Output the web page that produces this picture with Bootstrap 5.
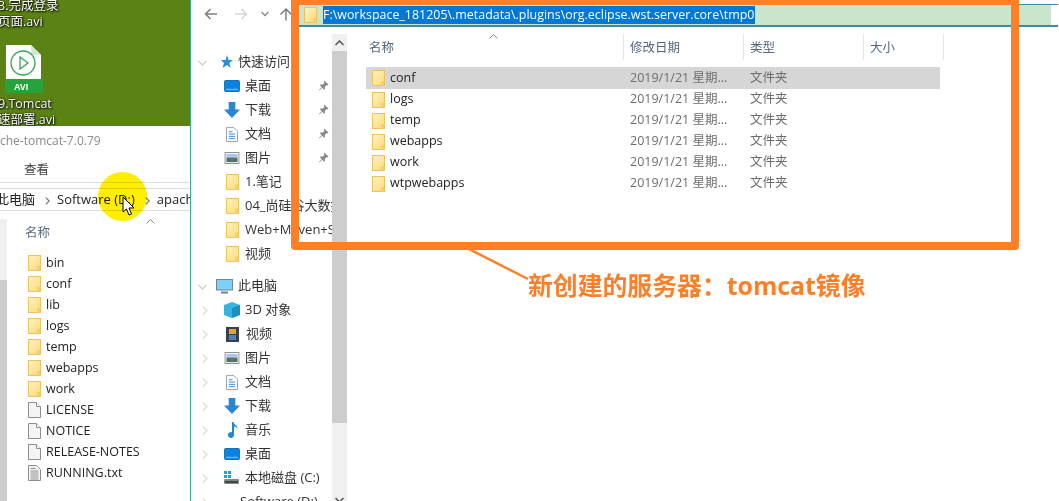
<!DOCTYPE html>
<html lang="zh-CN">
<head>
  <meta charset="UTF-8">
  <meta name="viewport" content="width=device-width, initial-scale=1.0">
  <title>tomcat镜像</title>
  <link href="https://cdn.jsdelivr.net/npm/bootstrap@5.3.0/dist/css/bootstrap.min.css" rel="stylesheet">
  <style>
    body {
      width: 1059px;
      height: 501px;
      overflow: hidden;
      position: relative;
      font-family: "Open Sans", "Noto Sans CJK SC", sans-serif;
      font-size: 12.5px;
      color: #222;
      background: #fff;
    }
    .left-win { width: 191px; flex: none; overflow: hidden; border-right: 1px solid #2fb48c; height: 501px; }
    .right-win { width: 867px; flex: none; height: 501px; overflow: hidden; border-left: 1px solid #fff; }

    /* desktop strip */
    .desk { height: 126px; background: #5a8214; color: #fff; text-shadow: 0 0 2px #000, 1px 1px 2px #000; line-height: 16px; font-size: 12.5px; overflow: hidden; padding-top: 1px; }
    .desk-text { margin-left: -2px; position: relative; top: -3px; }
    .desk-icon { width: 38px; height: 48px; margin: 12px 0 0 5px; display: block; }
    .desk-icon + .desk-text { margin-top: 6px; }
    .desk-icon text { font: 700 9px "Liberation Sans", sans-serif; fill: #fff; text-shadow: none; }

    .title-line { height: 30px; line-height: 30px; color: #8a8a8a; font-size: 12px; white-space: nowrap; }
    .menu-line { height: 27px; line-height: 27px; padding-left: 24px; border-bottom: 1px solid #dcdcdc; color: #444; }
    .crumb-line { height: 23px; line-height: 21px; margin-top: 5px; border-top: 1px solid #dcdcdc; border-bottom: 1px solid #dcdcdc; white-space: nowrap; overflow: hidden; margin-left: -4px; font-size: 13px; }
    .crumb-line span { margin-right: 10px; }
    .crumb-line svg { margin-right: 7px; }
    .left-track { width: 7px; background: #f0f0f0; flex: none; height: 290px; margin-top: 8px; }
    .left-thumb { height: 61px; }
    .left-thumb-on { height: 229px; background: #cdcdcd; }
    .left-head { height: 40px; padding: 10px 0 0 18px; color: #5a6d85; line-height: 24px; }
    .file-list { margin: 0 0 0 21px; padding: 1px 0 0 0; }
    .file-list li { height: 21px; line-height: 21px; display: flex; align-items: center; gap: 5px; white-space: nowrap; }

    /* right window */
    .tool-line { height: 27px; }
    .nav-btns { width: 106px; flex: none; padding-left: 12px; }
    .nav-drop { margin-left: 13px; }
    .nav-up { margin-left: 10px; }
    .addr { margin-top: 4px; height: 23px; border-top: 1px solid #3c8ca8; border-bottom: 2px solid #3c8ca8; flex: 1; display: flex; position: relative; }
    .addr-fill { flex: 1; background: #c8e6cc; display: flex; align-items: center; margin-right: 7px; padding-left: 6px; }
    .addr-sel { background: #0078d7; color: #fff; line-height: 18px; height: 18px; white-space: nowrap; font-size: 12.45px; padding-right: 1px; margin-left: 6px; }

    .side { width: 140px; flex: none; overflow: hidden; padding-top: 23px; }
    .side-row { height: 24px; display: flex; align-items: center; white-space: nowrap; position: relative; color: #333; font-size: 13px; }
    .side-row svg.ic { flex: none; margin-right: 5px; }
    .side-row svg.ic-w { margin-left: -16px; }
    .side-row svg.ic-n { margin-left: -14px; margin-right: 7px; }
    .side-row svg.ic-f { margin-left: -14px; margin-right: 6px; }
    .side-row svg.ic-m { margin-left: -12px; margin-right: 7px; }
    .sub { padding-left: 48px; }
    .top-row { padding-left: 26px; }
    .pc-row { padding-left: 24px; }
    .gap-row { height: 8px; }
    .pin { position: absolute; left: 126px; top: 6px; }
    .side-chev { position: absolute; left: 10px; top: 8px; }
    .side-chev-open { left: 6px; top: 10px; }

    .vbar { width: 15px; flex: none; background: #f0f0f0; margin-top: 7px; height: 474px; position: relative; }
    .vbar-btn { height: 17px; display: flex; align-items: center; justify-content: center; }
    .vbar-thumb { height: 372px; background: #cdcdcd; }
    .vbar-end { position: absolute; bottom: 0; left: 0; right: 0; }

    .list-pane { flex: 1; position: relative; padding-left: 19px; }
    .head-row { height: 26px; margin-top: 7px; display: flex; color: #54667f; position: relative; }
    .head-cell { border-right: 1px solid #e5e5e5; line-height: 28px; padding-left: 6px; flex: none; }
    .c-name { width: 258px; padding-left: 3px; }
    .c-date { width: 120px; }
    .c-type { width: 120px; }
    .c-size { width: 80px; }
    .sort-mark { position: absolute; left: 123px; top: 0; }
    .row-list { margin: 7px 0 0 0; padding: 0; list-style: none; width: 574px; }
    .row-list li { height: 21px; display: flex; align-items: center; color: #6d6d6d; white-space: nowrap; }
    .row-list li.sel { background: #d6d6d6; height: 22px; }
    .r-name { width: 258px; flex: none; display: flex; align-items: center; gap: 5px; color: #222; padding-left: 6px; }
    .r-date { width: 120px; flex: none; padding-left: 6px; }

    /* annotation layer */
    .mark-box { position: absolute; left: 291px; top: -3px; width: 728px; height: 253px; border: 8px solid #ff7f27; border-radius: 4px; }
    .mark-line { position: absolute; left: 460px; top: 245px; }
    .mark-text { position: absolute; left: 528px; top: 268px; font: 700 24.85px/34px "Open Sans", "Noto Sans CJK SC", sans-serif; color: #ff7f27; white-space: nowrap; text-shadow: 0 0 1px #fff; }
    .spot { position: absolute; left: 98px; top: 172px; width: 49px; height: 49px; border-radius: 50%; background: #ffee00; mix-blend-mode: multiply; }
    .cursor-ic { position: absolute; left: 122px; top: 196px; }
    .left-sort { position: absolute; left: 146px; top: 219px; }
  </style>
</head>
<body>
  <svg width="0" height="0" class="position-absolute">
    <defs>
      <linearGradient id="fg" x1="0" y1="0" x2="1" y2="1"><stop offset="0" stop-color="#fff2c2"/><stop offset="1" stop-color="#fdd978"/></linearGradient>
      <symbol id="folder" viewBox="0 0 13 16"><rect x=".5" y=".5" width="12" height="15" fill="url(#fg)" stroke="#eec25f"/><rect x="9" y="11" width="3" height="4.500" fill="#f6cf6c"/></symbol>
      <symbol id="doc" viewBox="0 0 13 16"><path d="M.5.500h8l4 4v11H.5z" fill="#f4f4f4" stroke="#8e8e8e"/><path d="M8.500.5v4h4" fill="#fff" stroke="#8e8e8e"/></symbol>
      <symbol id="txt" viewBox="0 0 13 16"><path d="M.5.500h8l4 4v11H.5z" fill="#f4f4f4" stroke="#8e8e8e"/><path d="M2.500 3.500h5M2.500 6h8M2.500 8h8M2.500 10h8M2.500 12h8M2.500 14h8" stroke="#8e8e8e"/></symbol>
      <symbol id="desktop" viewBox="0 0 17 13"><rect x=".5" y=".5" width="16" height="12" rx="1" fill="#0a84e0" stroke="#0764ad"/><rect x="2" y="9.500" width="13" height="1.500" fill="#5cb8f5"/></symbol>
      <symbol id="down" viewBox="0 0 17 17"><path d="M5 0h7v8h5l-8.500 9L0 8h5z" fill="#2a84d8"/></symbol>
      <symbol id="docs" viewBox="0 0 13 16"><path d="M.5.500h8l4 4v11H.5z" fill="#fff" stroke="#8a9aa8"/><path d="M3 5h4M3 7.500h7M3 10h7M3 12.500h7" stroke="#2a84d8"/></symbol>
      <symbol id="pics" viewBox="0 0 16 13"><rect x=".5" y=".5" width="15" height="12" fill="#fff" stroke="#8a8a8a"/><rect x="2" y="2" width="12" height="4" fill="#a9c6e6"/><path d="M2 6h12v5H2z" fill="#4f7269"/></symbol>
      <symbol id="pin" viewBox="0 0 12 12"><path d="M7 .5l4.500 4.500-1 1-1-.5-2 2 .2 2-1 1-2-2-3.200 3 -.5-.5 3-3.200-2-2 1-1 2 .2 2-2-.5-1z" fill="#8c8c8c"/></symbol>
      <symbol id="chevr" viewBox="0 0 6 9"><path d="M1 .5l4 4-4 4" fill="none" stroke="#dcdcdc" stroke-width="1.300"/></symbol>
      <symbol id="chevc" viewBox="0 0 6 9"><path d="M1 .5l4 4-4 4" fill="none" stroke="#7a7a7a" stroke-width="1.500"/></symbol>
      <symbol id="chevd" viewBox="0 0 9 6"><path d="M.5 1l4 4 4-4" fill="none" stroke="#d0d0d0" stroke-width="1.300"/></symbol>
    </defs>
  </svg>

  <div class="d-flex">
    <div class="left-win">
      <div class="desk">
        <div class="desk-text">3.完成登录</div>
        <div class="desk-text">页面.avi</div>
        <svg class="desk-icon" viewBox="0 0 38 48">
          <path d="M1 0h25l10 10v26H1z" fill="#fff"/>
          <path d="M26 0l10 10H26z" fill="#cfe8d2"/>
          <rect y="34" width="38" height="14" fill="#27a33c"/>
          <circle cx="18" cy="18" r="12" fill="none" stroke="#3aa552" stroke-width="1.300"/>
          <path d="M15 12l8 6-8 6z" fill="none" stroke="#3aa552" stroke-width="1.300"/>
          <text x="9" y="45">AVI</text>
        </svg>
        <div class="desk-text">9.Tomcat</div>
        <div class="desk-text">速部署.avi</div>
      </div>
      <div class="title-line">che-tomcat-7.0.79</div>
      <div class="menu-line">查看</div>
      <div class="crumb-line">
        <span>此电脑</span><svg width="5" height="8"><use href="#chevc"/></svg><span>Software (D:)</span><svg width="5" height="8"><use href="#chevc"/></svg><span>apache-tomcat</span>
      </div>
      <div class="d-flex">
        <div class="left-track"><div class="left-thumb"></div><div class="left-thumb-on"></div></div>
        <div class="flex-grow-1">
          <div class="left-head">名称</div>
          <ul class="file-list list-unstyled">
            <li><svg width="13" height="16"><use href="#folder"/></svg>bin</li>
            <li><svg width="13" height="16"><use href="#folder"/></svg>conf</li>
            <li><svg width="13" height="16"><use href="#folder"/></svg>lib</li>
            <li><svg width="13" height="16"><use href="#folder"/></svg>logs</li>
            <li><svg width="13" height="16"><use href="#folder"/></svg>temp</li>
            <li><svg width="13" height="16"><use href="#folder"/></svg>webapps</li>
            <li><svg width="13" height="16"><use href="#folder"/></svg>work</li>
            <li><svg width="13" height="16"><use href="#doc"/></svg>LICENSE</li>
            <li><svg width="13" height="16"><use href="#doc"/></svg>NOTICE</li>
            <li><svg width="13" height="16"><use href="#doc"/></svg>RELEASE-NOTES</li>
            <li><svg width="13" height="16"><use href="#txt"/></svg>RUNNING.txt</li>
          </ul>
        </div>
      </div>
    </div>

    <div class="right-win">
      <div class="tool-line d-flex">
        <div class="nav-btns d-flex align-items-center">
          <svg width="14" height="12" viewBox="0 0 14 12" class="me-3"><path d="M13 6H2M6.500 1L1.500 6l5 5" fill="none" stroke="#7d7d7d" stroke-width="1.500"/></svg>
          <svg width="14" height="12" viewBox="0 0 14 12"><path d="M1 6h11M7.500 1l5 5-5 5" fill="none" stroke="#d6d6d6" stroke-width="1.500"/></svg>
          <svg class="nav-drop" width="8" height="6" viewBox="0 0 8 6"><path d="M.5 1l3.500 3.500L7.500 1" fill="none" stroke="#8a8a8a" stroke-width="1.300"/></svg>
          <svg class="nav-up" width="14" height="14" viewBox="0 0 14 14"><path d="M7 13.500V2M1.500 7.500L7 2l5.500 5.500" fill="none" stroke="#7d7d7d" stroke-width="1.500"/></svg>
        </div>
        <div class="addr">
          <div class="addr-fill">
            <svg width="13" height="16"><use href="#folder"/></svg>
            <span class="addr-sel">F:\workspace_181205\.metadata\.plugins\org.eclipse.wst.server.core\tmp0</span>
          </div>
        </div>
      </div>
      <div class="d-flex">
        <div class="side">
          <div class="side-row top-row"><svg class="side-chev side-chev-open" width="9" height="6"><use href="#chevd"/></svg>
            <svg class="ic" width="15" height="14" viewBox="0 0 15 14"><path d="M9 0l1.500 5H15l-3.700 3 1.400 5L9 10l-4.500 3 1.500-5-3-3h4.500z" fill="#2a8ede"/></svg>快速访问</div>
          <div class="side-row sub"><svg class="ic ic-w" width="16" height="12"><use href="#desktop"/></svg>桌面<svg class="pin" width="11" height="11"><use href="#pin"/></svg></div>
          <div class="side-row sub"><svg class="ic ic-w" width="16" height="16"><use href="#down"/></svg>下载<svg class="pin" width="11" height="11"><use href="#pin"/></svg></div>
          <div class="side-row sub"><svg class="ic ic-n" width="12" height="15"><use href="#docs"/></svg>文档<svg class="pin" width="11" height="11"><use href="#pin"/></svg></div>
          <div class="side-row sub"><svg class="ic ic-w" width="16" height="12"><use href="#pics"/></svg>图片<svg class="pin" width="11" height="11"><use href="#pin"/></svg></div>
          <div class="side-row sub"><svg class="ic ic-f" width="13" height="16"><use href="#folder"/></svg>1.笔记</div>
          <div class="side-row sub"><svg class="ic ic-f" width="13" height="16"><use href="#folder"/></svg>04_尚硅谷大数据技术</div>
          <div class="side-row sub"><svg class="ic ic-f" width="13" height="16"><use href="#folder"/></svg>Web+Maven+Spring</div>
          <div class="side-row sub"><svg class="ic ic-f" width="13" height="16"><use href="#folder"/></svg>视频</div>
          <div class="gap-row"></div>
          <div class="side-row pc-row"><svg class="side-chev side-chev-open" width="9" height="6"><use href="#chevd"/></svg>
            <svg class="ic" width="17" height="15" viewBox="0 0 17 15"><rect x=".5" y=".5" width="16" height="10.500" fill="#7fd0f7" stroke="#6f8796"/><path d="M5 13.500h7" stroke="#6f8796" stroke-width="2"/></svg>此电脑</div>
          <div class="side-row sub"><svg class="side-chev" width="6" height="9"><use href="#chevr"/></svg><svg class="ic ic-w" width="16" height="16" viewBox="0 0 16 16"><path d="M8 0l8 3v10l-8 3-8-3V3z" fill="#35b4e0"/><path d="M8 6l8-3v10l-8 3z" fill="#1b90c0"/></svg>3D 对象</div>
          <div class="side-row sub"><svg class="side-chev" width="6" height="9"><use href="#chevr"/></svg><svg class="ic ic-n" width="13" height="15" viewBox="0 0 13 15"><rect width="13" height="15" fill="#3a3f4a"/><rect x="3" y="2" width="7" height="5" fill="#d8a83c"/><rect x="3" y="8" width="7" height="5" fill="#4b7fc0"/></svg>视频</div>
          <div class="side-row sub"><svg class="side-chev" width="6" height="9"><use href="#chevr"/></svg><svg class="ic ic-w" width="16" height="12"><use href="#pics"/></svg>图片</div>
          <div class="side-row sub"><svg class="side-chev" width="6" height="9"><use href="#chevr"/></svg><svg class="ic ic-n" width="12" height="15"><use href="#docs"/></svg>文档</div>
          <div class="side-row sub"><svg class="side-chev" width="6" height="9"><use href="#chevr"/></svg><svg class="ic ic-w" width="16" height="16"><use href="#down"/></svg>下载</div>
          <div class="side-row sub"><svg class="side-chev" width="6" height="9"><use href="#chevr"/></svg><svg class="ic ic-m" width="10" height="16" viewBox="0 0 10 16"><path d="M4 0h1.500c.5 3 4.500 3.500 4 7-1-2-2-2.500-3.500-2.500V13a3 3 0 1 1-2-2.800z" fill="#1e88dc"/></svg>音乐</div>
          <div class="side-row sub"><svg class="side-chev" width="6" height="9"><use href="#chevr"/></svg><svg class="ic ic-w" width="16" height="12"><use href="#desktop"/></svg>桌面</div>
          <div class="side-row sub"><svg class="side-chev" width="6" height="9"><use href="#chevr"/></svg><svg class="ic ic-w" width="16" height="14" viewBox="0 0 16 14"><rect y="8" width="15" height="5" rx="1" fill="#7e8a86"/><rect x="1" y="10" width="13" height="2" fill="#3f4a46"/><rect x="0" y="0" width="3" height="3" fill="#27a0d8"/><rect x="4" y="0" width="3" height="3" fill="#27a0d8"/><rect x="0" y="4" width="3" height="3" fill="#27a0d8"/><rect x="4" y="4" width="3" height="3" fill="#27a0d8"/></svg>本地磁盘 (C:)</div>
          <div class="side-row sub"><svg class="side-chev" width="6" height="9"><use href="#chevr"/></svg>Software (D:)</div>
        </div>
        <div class="vbar">
          <div class="vbar-btn"><svg width="9" height="6" viewBox="0 0 9 6"><path d="M.5 5l4-4 4 4" fill="none" stroke="#505050" stroke-width="1.500"/></svg></div>
          <div class="vbar-thumb"></div>
          <div class="vbar-btn vbar-end"><svg width="9" height="6" viewBox="0 0 9 6"><path d="M.5 1l4 4 4-4" fill="none" stroke="#505050" stroke-width="1.500"/></svg></div>
        </div>
        <div class="list-pane">
          <div class="head-row">
            <svg class="sort-mark" width="9" height="5" viewBox="0 0 9 5"><path d="M.5 4.500l4-4 4 4" fill="none" stroke="#8a8a8a"/></svg>
            <div class="head-cell c-name">名称</div>
            <div class="head-cell c-date">修改日期</div>
            <div class="head-cell c-type">类型</div>
            <div class="head-cell c-size">大小</div>
          </div>
          <ul class="row-list">
            <li class="sel"><div class="r-name"><svg width="13" height="16"><use href="#folder"/></svg>conf</div><div class="r-date">2019/1/21 星期...</div><div class="r-date">文件夹</div></li>
            <li><div class="r-name"><svg width="13" height="16"><use href="#folder"/></svg>logs</div><div class="r-date">2019/1/21 星期...</div><div class="r-date">文件夹</div></li>
            <li><div class="r-name"><svg width="13" height="16"><use href="#folder"/></svg>temp</div><div class="r-date">2019/1/21 星期...</div><div class="r-date">文件夹</div></li>
            <li><div class="r-name"><svg width="13" height="16"><use href="#folder"/></svg>webapps</div><div class="r-date">2019/1/21 星期...</div><div class="r-date">文件夹</div></li>
            <li><div class="r-name"><svg width="13" height="16"><use href="#folder"/></svg>work</div><div class="r-date">2019/1/21 星期...</div><div class="r-date">文件夹</div></li>
            <li><div class="r-name"><svg width="13" height="16"><use href="#folder"/></svg>wtpwebapps</div><div class="r-date">2019/1/21 星期...</div><div class="r-date">文件夹</div></li>
          </ul>
        </div>
      </div>
    </div>
  </div>

  <div class="spot"></div>
  <svg class="cursor-ic" width="14" height="20" viewBox="0 0 14 20"><path d="M1 1v15l3.500-3 2.500 6 2.500-1-2.500-6h5z" fill="#fff" stroke="#000"/></svg>
  <svg class="left-sort" width="9" height="5" viewBox="0 0 9 5"><path d="M.5 4.500l4-4 4 4" fill="none" stroke="#8a8a8a"/></svg>
  <div class="mark-box"></div>
  <svg class="mark-line" width="72" height="38" viewBox="0 0 72 38"><path d="M5 2l63 32" stroke="#ff7f27" stroke-width="2.500"/></svg>
  <div class="mark-text">新创建的服务器：tomcat镜像</div>

  <script src="https://cdn.jsdelivr.net/npm/bootstrap@5.3.0/dist/js/bootstrap.bundle.min.js"></script>
</body>
</html>
